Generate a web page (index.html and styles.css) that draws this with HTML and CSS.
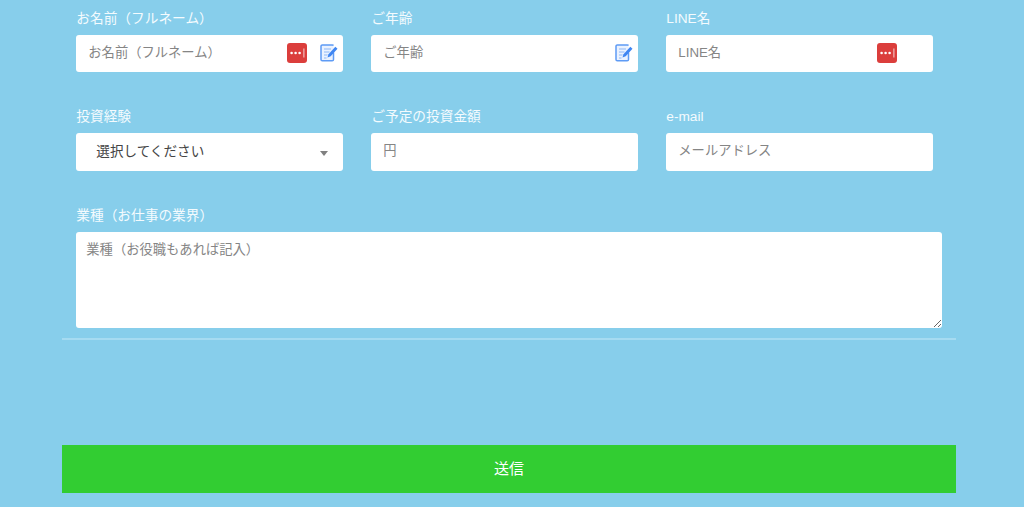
FILE: index.html
```html
<!DOCTYPE html>
<html lang="ja">
<head>
<meta charset="utf-8">
<title>フォーム</title>
<link rel="stylesheet" href="styles.css">
</head>
<body>
<svg class="sprites" width="0" height="0" aria-hidden="true">
  <symbol id="dots" viewBox="0 0 20 20">
    <rect width="20" height="20" rx="3" fill="#db3e3c"/>
    <circle cx="4.6" cy="10" r="1.3" fill="#fff"/>
    <circle cx="8.6" cy="10" r="1.3" fill="#fff"/>
    <circle cx="12.6" cy="10" r="1.3" fill="#fff"/>
    <rect x="16.4" y="5.5" width="1" height="9" fill="#f6d5d4"/>
  </symbol>
  <symbol id="note" viewBox="0 0 18 18">
    <path d="M13.5 8.5V15.5a1.3 1.3 0 0 1-1.3 1.3H2.3A1.3 1.3 0 0 1 1 15.5V2.3A1.3 1.3 0 0 1 2.3 1h10.2a1.3 1.3 0 0 1 1 .5" fill="#eaf2ff" stroke="#5e9bf5" stroke-width="1.5"/>
    <path d="M4 5h7M4 8h5.5M4 11h3.5M4 14h2.5" stroke="#8db8f8" stroke-width="1.2"/>
    <path d="M7.5 13.5l1-3.2 6.8-7.6 2.2 2-6.8 7.6z" fill="#3f86f2"/>
  </symbol>
</svg>
<form class="form">
  <div class="grid">
    <div class="field">
      <label class="label">お名前（フルネーム）</label>
      <div class="control">
        <input class="input input-wide" type="text" placeholder="お名前（フルネーム）">
        <svg class="icon icon-dots"><use href="#dots"/></svg>
        <svg class="icon icon-note"><use href="#note"/></svg>
      </div>
    </div>
    <div class="field">
      <label class="label">ご年齢</label>
      <div class="control">
        <input class="input input-wide" type="text" placeholder="ご年齢">
        <svg class="icon icon-note"><use href="#note"/></svg>
      </div>
    </div>
    <div class="field">
      <label class="label">LINE名</label>
      <div class="control">
        <input class="input" type="text" placeholder="LINE名">
        <svg class="icon icon-dots"><use href="#dots"/></svg>
      </div>
    </div>
    <div class="field">
      <label class="label">投資経験</label>
      <div class="control">
        <select class="input select"><option>選択してください</option></select>
        <span class="caret"></span>
      </div>
    </div>
    <div class="field">
      <label class="label">ご予定の投資金額</label>
      <div class="control">
        <input class="input" type="text" placeholder="円">
      </div>
    </div>
    <div class="field">
      <label class="label">e-mail</label>
      <div class="control">
        <input class="input" type="email" placeholder="メールアドレス">
      </div>
    </div>
  </div>
  <div class="field field-full">
    <label class="label">業種（お仕事の業界）</label>
    <textarea class="textarea" placeholder="業種（お役職もあれば記入）"></textarea>
  </div>
  <hr class="rule">
  <button class="submit" type="button">送信</button>
</form>
</body>
</html>
```
FILE: styles.css
```css
* {
  box-sizing: border-box;
}

html,
body {
  margin: 0;
  height: 507px;
  overflow: hidden;
}

body {
  background: #87ceeb;
  font-family: "Liberation Sans", "Noto Sans CJK JP", sans-serif;
}

.sprites {
  display: block;
  height: 0;
}

.form {
  width: 894px;
  margin-left: 62px;
  padding-top: 8.5px;
}

.grid {
  display: grid;
  grid-template-columns: repeat(3, 267px);
  column-gap: 28px;
  row-gap: 35.5px;
  padding-left: 14.3px;
}

.label {
  display: block;
  height: 26px;
  line-height: 20px;
  font-size: 13.7px;
  color: #f4fbfe;
}

.control {
  position: relative;
  height: 37px;
}

.input {
  display: block;
  width: 100%;
  height: 37.5px;
  border: 0;
  border-radius: 3px;
  background: #fff;
  padding: 0 12px 2px;
  font-family: inherit;
  font-size: 13.3px;
  color: #333;
  outline: 0;
}

.input::placeholder,
.textarea::placeholder {
  color: #858585;
  opacity: 1;
}

.input-wide {
  padding-right: 60px;
}

.select {
  appearance: none;
  padding: 0 20px 2px;
  height: 38px;
  font-size: 13.6px;
  color: #444;
}

.caret {
  position: absolute;
  right: 15px;
  top: 18px;
  border-style: solid;
  border-width: 5px 4.5px 0;
  border-color: #808080 transparent transparent;
}

.icon {
  position: absolute;
}

.icon-dots {
  width: 20px;
  height: 20px;
  right: 36.5px;
  top: 8.5px;
}

.icon-note {
  width: 18px;
  height: 18px;
  right: 5px;
  top: 9px;
}

.field-full {
  margin-top: 35.5px;
  padding-left: 14.3px;
}

.textarea {
  display: block;
  width: 866px;
  height: 96px;
  border: 0;
  border-radius: 3px;
  background: #fff;
  padding: 9px 10px;
  font-family: inherit;
  font-size: 13.3px;
  line-height: 18px;
  color: #333;
  outline: 0;
}

.rule {
  height: 2px;
  margin: 10px 0 0;
  border: 0;
  background: #a6dbf1;
}

.submit {
  display: block;
  width: 100%;
  height: 48px;
  margin-top: 105px;
  padding-bottom: 4px;
  border: 0;
  background: #32cd32;
  color: #fff;
  font-family: inherit;
  font-size: 15px;
}
```
